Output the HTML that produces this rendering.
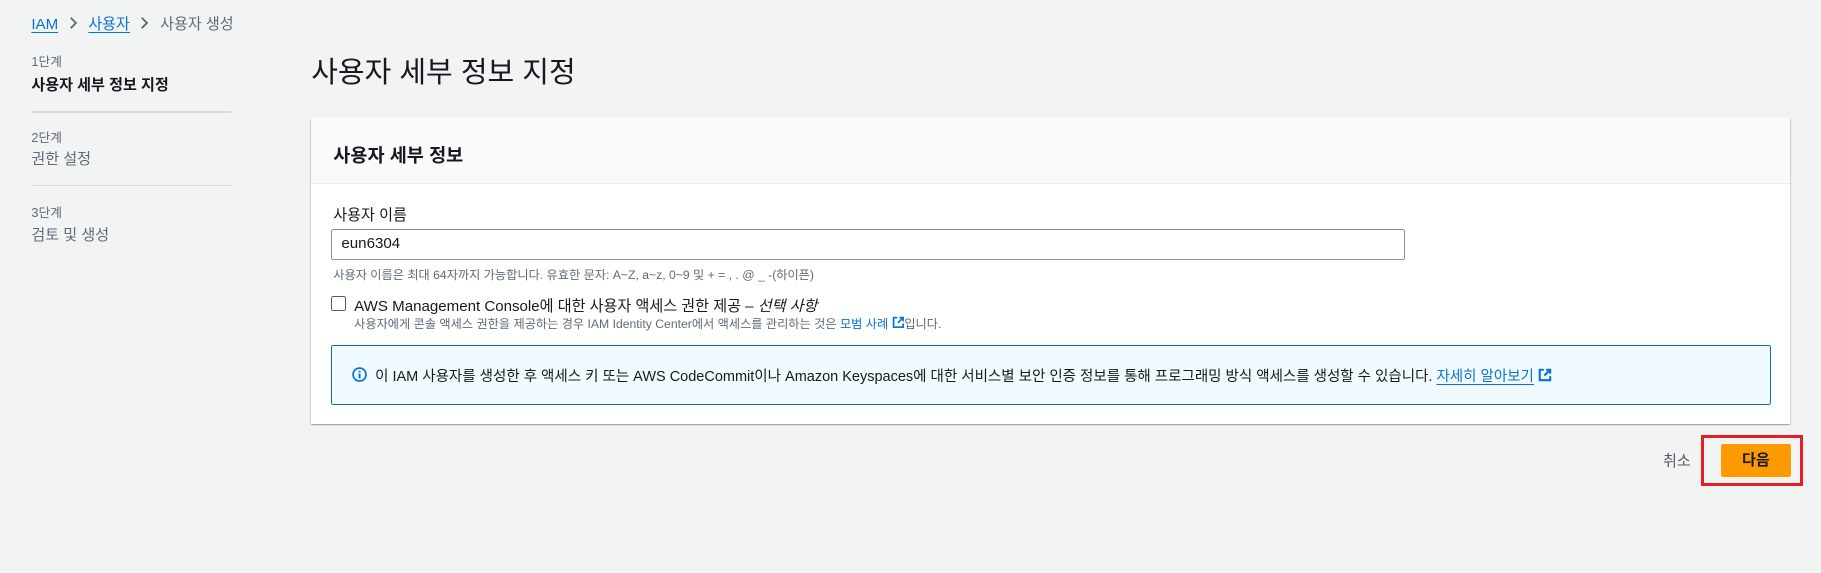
<!DOCTYPE html>
<html><head><meta charset="utf-8"><style>
html,body{margin:0;padding:0}
body{width:1821px;height:572px;overflow:hidden;background:#f2f3f3;font-family:"Liberation Sans","Noto Sans CJK KR",sans-serif;color:#16191f}
#w{zoom:1.1613;position:relative;width:1568px;height:493px}
.a{position:absolute;white-space:nowrap}
.lk{color:#0972d3;text-decoration:underline;text-underline-offset:3px}
.g{color:#5f6b7a}
.hr{position:absolute;left:27px;width:172px;height:1px;background:#d5dbdb}
.ch{margin:0 9px;vertical-align:-1px}
</style></head><body><div id="w">
<div class="a" style="left:27px;top:10px;font-size:13px"><span class="lk">IAM</span><svg class="ch" width="8" height="12" viewBox="0 0 8 12"><path d="M1.5 1.5 6 6l-4.5 4.5" fill="none" stroke="#5f6b7a" stroke-width="1.6"/></svg><span class="lk">사용자</span><svg class="ch" width="8" height="12" viewBox="0 0 8 12"><path d="M1.5 1.5 6 6l-4.5 4.5" fill="none" stroke="#5f6b7a" stroke-width="1.6"/></svg><span class="g">사용자 생성</span></div>
<div class="a g" style="left:27px;top:44px;font-size:11px">1단계</div>
<div class="a" style="left:27px;top:63px;font-size:13px;font-weight:bold">사용자 세부 정보 지정</div>
<div class="hr" style="top:96px"></div>
<div class="a g" style="left:27px;top:109px;font-size:11px">2단계</div>
<div class="a g" style="left:27px;top:127px;font-size:13px">권한 설정</div>
<div class="hr" style="top:159px"></div>
<div class="a g" style="left:27px;top:174px;font-size:11px">3단계</div>
<div class="a g" style="left:27px;top:192px;font-size:13px">검토 및 생성</div>
<div class="a" style="left:268px;top:42px;font-size:25px">사용자 세부 정보 지정</div>
<div style="position:absolute;left:268px;top:102px;width:1273px;height:263px;background:#fff;box-shadow:0 1px 1px 0 rgba(0,28,36,.3),1px 1px 1px 0 rgba(0,28,36,.15),-1px 1px 1px 0 rgba(0,28,36,.15)">
 <div style="height:56px;background:#fafafa;border-bottom:1px solid #eaeded"></div>
 <div class="a" style="left:19px;top:19px;font-size:16px;font-weight:bold">사용자 세부 정보</div>
 <div class="a" style="left:19px;top:73px;font-size:13px">사용자 이름</div>
 <div style="position:absolute;left:17px;top:95px;width:923px;height:25px;border:1px solid #879596;border-radius:2px"></div>
 <div class="a" style="left:26px;top:100px;font-size:13px">eun6304</div>
 <div class="a g" style="left:19px;top:126px;font-size:10.5px">사용자 이름은 최대 64자까지 가능합니다. 유효한 문자: A~Z, a~z, 0~9 및 + = , . @ _ -(하이픈)</div>
 <div style="position:absolute;left:17px;top:153px;width:11px;height:11px;border:1px solid #545b64;border-radius:2px"></div>
 <div class="a" style="left:37px;top:151px;font-size:13px">AWS Management Console에 대한 사용자 액세스 권한 제공 – <i>선택 사항</i></div>
 <div class="a g" style="left:37px;top:168px;font-size:10.5px">사용자에게 콘솔 액세스 권한을 제공하는 경우 IAM Identity Center에서 액세스를 관리하는 것은 <span style="color:#0972d3">모범 사례 <svg width="11" height="11" viewBox="0 0 12 12" style="vertical-align:-1px"><path d="M5 1.5H1.5v9h9V7M7 1.5h3.5V5M10.5 1.5 5.5 6.5" fill="none" stroke="#0972d3" stroke-width="1.6"/></svg></span>입니다.</div>
 <div style="position:absolute;left:17px;top:195px;width:1238px;height:50px;border:1px solid #0073bb;border-radius:2px;background:#f1faff"></div>
 <svg class="a" style="left:35px;top:214px" width="13" height="13" viewBox="0 0 14 14"><circle cx="7" cy="7" r="6" fill="none" stroke="#0972d3" stroke-width="1.6"/><path d="M7 6v4.5M7 3.5v1.5" stroke="#0972d3" stroke-width="1.8"/></svg>
 <div class="a" style="left:55px;top:212px;font-size:12.5px">이 IAM 사용자를 생성한 후 액세스 키 또는 AWS CodeCommit이나 Amazon Keyspaces에 대한 서비스별 보안 인증 정보를 통해 프로그래밍 방식 액세스를 생성할 수 있습니다. <span class="lk">자세히 알아보기</span> <svg width="12" height="12" viewBox="0 0 12 12" style="vertical-align:-1px"><path d="M5 1.5H1.5v9h9V7M7 1.5h3.5V5M10.5 1.5 5.5 6.5" fill="none" stroke="#0972d3" stroke-width="1.8"/></svg></div>
</div>
<div class="a" style="left:1432px;top:387px;font-size:13px;color:#545b64">취소</div>
<div style="position:absolute;left:1465px;top:375px;width:82px;height:38px;border:3px solid #e41e26"></div>
<div style="position:absolute;left:1482px;top:382px;width:60px;height:29px;background:#ff9900;border-radius:2px;font-size:13px;font-weight:bold;text-align:center;line-height:29px">다음</div>
</div></body></html>
